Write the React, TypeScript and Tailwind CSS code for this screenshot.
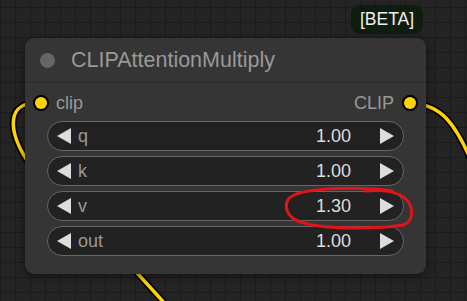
import React from "react";

type Widget = { label: string; value: string };

const widgets: Widget[] = [
  { label: "q", value: "1.00" },
  { label: "k", value: "1.00" },
  { label: "v", value: "1.30" },
  { label: "out", value: "1.00" },
];

function Arrow({ dir }: { dir: "left" | "right" }) {
  return (
    <svg width="14" height="16" viewBox="0 0 14 16" className="shrink-0">
      {dir === "left" ? (
        <polygon points="14,0 14,16 0,8" fill="#dddddd" />
      ) : (
        <polygon points="0,0 0,16 14,8" fill="#dddddd" />
      )}
    </svg>
  );
}

function Slot() {
  return <div className="h-[12px] w-[12px] rounded-full bg-[#ffd500] ring-2 ring-black shrink-0"></div>;
}

function NumberWidget({ label, value }: Widget) {
  return (
    <div className="h-[30px] flex items-center rounded-full border border-[#666666] bg-[#222222] pl-[9px] pr-[9px] text-[18px]">
      <Arrow dir="left" />
      <span className="ml-[7px] text-[#999999]">{label}</span>
      <span className="ml-auto text-[#dddddd]">{value}</span>
      <div className="ml-[29px]">
        <Arrow dir="right" />
      </div>
    </div>
  );
}

export default function App() {
  return (
    <div
      className="relative w-[467px] h-[301px] overflow-hidden bg-[#242424] bg-[linear-gradient(to_right,#1b1b1b_1px,transparent_1px),linear-gradient(to_bottom,#1b1b1b_1px,transparent_1px)] bg-[size:15px_15px] bg-[position:0px_7px]"
      style={{ fontFamily: '"Liberation Sans", Arial, sans-serif' }}
    >
      {/* wires */}
      <svg className="absolute inset-0" width="467" height="301">
        <g fill="none" strokeLinecap="round">
          <path d="M40 104 C 8 100, 4 128, 32 168" stroke="#000" strokeWidth="7" />
          <path d="M40 104 C 8 100, 4 128, 32 168" stroke="#ffd500" strokeWidth="3.5" />
          <path d="M413 104 C 440 104, 456 122, 476 172" stroke="#000" strokeWidth="7" />
          <path d="M413 104 C 440 104, 456 122, 476 172" stroke="#ffd500" strokeWidth="3.5" />
          <path d="M118 252 L 178 318" stroke="#000" strokeWidth="7" />
          <path d="M118 252 L 178 318" stroke="#ffd500" strokeWidth="3.5" />
        </g>
      </svg>

      {/* badge */}
      <div className="absolute left-[351px] top-[5px] w-[72px] h-[29px] rounded-[9px] bg-[#0f1d0f] flex items-center justify-center text-[17.5px] text-[#eeeeee]">
        [BETA]
      </div>

      {/* node */}
      <div className="absolute left-[25px] top-[38px] w-[401px] h-[236px] rounded-[9px] bg-[#353535] shadow-[0_2px_8px_rgba(0,0,0,0.5)] flex flex-col">
        <div className="h-[45px] flex items-center pl-[15px] border-b border-[#2c2c2c]">
          <div className="h-[15px] w-[15px] rounded-full bg-[#666666]"></div>
          <span className="ml-[16px] text-[21.5px] text-[#999999]">CLIPAttentionMultiply</span>
        </div>
        <div className="flex flex-col px-[22px] pt-[6px]">
          <div className="h-[28px] flex items-center -mx-[12px] text-[18px] text-[#999999]">
            <Slot />
            <span className="ml-[9px]">clip</span>
            <span className="ml-auto mr-[10px]">CLIP</span>
            <Slot />
          </div>
          <div className="mt-[4px] flex flex-col gap-[5px]">
            {widgets.map((w) => (
              <NumberWidget key={w.label} label={w.label} value={w.value} />
            ))}
          </div>
        </div>
      </div>

      {/* hand drawn mark */}
      <svg className="absolute inset-0 pointer-events-none" width="467" height="301">
        <path
          d="M392 191 C 360 186, 310 188, 294 195 C 282 201, 284 216, 300 222 C 325 230, 380 229, 403 225 C 416 221, 414 201, 400 195 C 390 190, 375 190, 365 191"
          fill="none"
          stroke="#e0141a"
          strokeWidth="3"
          strokeLinecap="round"
        />
      </svg>
    </div>
  );
}
